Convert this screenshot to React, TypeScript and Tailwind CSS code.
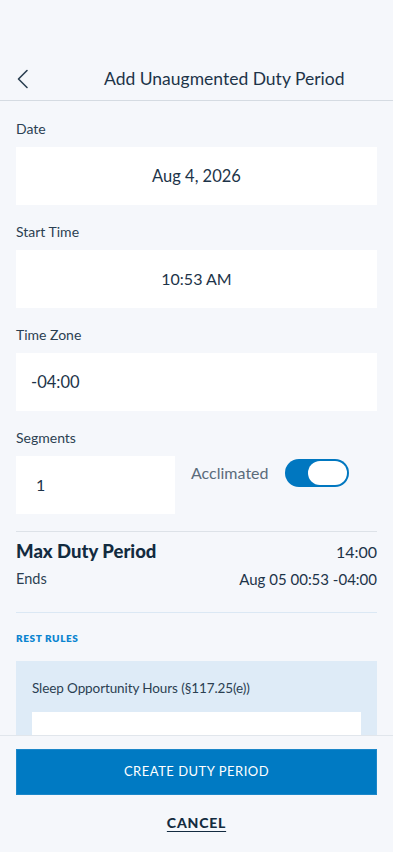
import React from 'react';

const font = { fontFamily: 'Lato, "Open Sans", Arial, sans-serif' };

function Field({ label, children }: { label: string; children: React.ReactNode }) {
  return (
    <div className="flex flex-col">
      <span className="text-[14px] leading-[20px] text-[#2b3f52]">{label}</span>
      <div className="mt-2">{children}</div>
    </div>
  );
}

export default function App() {
  return (
    <div style={font} className="h-[852px] w-full bg-[#f5f7fb] flex flex-col overflow-hidden text-[#1d3449]">
      {/* Header */}
      <div className="h-[101px] pt-[56px] border-b border-[#d5dbe2] shrink-0">
        <div className="h-[45px] flex items-center relative">
          <button className="w-[44px] h-[44px] flex items-center justify-center ml-[1px]">
            <svg width="14" height="20" viewBox="0 0 14 20" fill="none">
              <path d="M11 1.5 L2.5 10 L11 18.5" stroke="#2b3f52" strokeWidth="1.6" strokeLinecap="round" strokeLinejoin="round" />
            </svg>
          </button>
          <h1 className="ml-[59px] text-[17.5px] leading-[24px] text-[#1d3449]">Add Unaugmented Duty Period</h1>
        </div>
      </div>

      {/* Scroll area */}
      <div className="flex-1 overflow-hidden px-4 pt-[18px]">
        <div className="flex flex-col gap-[17px]">
          <Field label="Date">
            <div className="h-[58px] bg-white flex items-center justify-center text-[16.5px]">Aug 4, 2026</div>
          </Field>
          <Field label="Start Time">
            <div className="h-[58px] bg-white flex items-center justify-center text-[16px]">10:53 AM</div>
          </Field>
          <Field label="Time Zone">
            <div className="h-[58px] bg-white flex items-center px-[15px] text-[16.5px]">-04:00</div>
          </Field>
          <Field label="Segments">
            <div className="flex items-start">
              <div className="w-[159px] h-[58px] bg-white flex items-center px-5 text-[16px]">1</div>
              <div className="ml-4 flex items-center h-[34px] gap-[17px]">
                <span className="text-[16px] text-[#5b6b7a]">Acclimated</span>
                <div className="w-[64px] h-[28px] rounded-full bg-[#0077c0] flex items-center justify-end pr-[2px]">
                  <div className="w-[39px] h-[24px] rounded-full bg-white" />
                </div>
              </div>
            </div>
          </Field>
        </div>

        <div className="mt-[17px] border-t border-[#dde2e8]" />
        <div className="pt-2">
          <div className="flex justify-between items-center h-[24px]">
            <span className="text-[18.5px] font-black text-[#132b40]">Max Duty Period</span>
            <span className="text-[16px] text-[#1d3449]">14:00</span>
          </div>
          <div className="flex justify-between items-center h-[20px] mt-[5px]">
            <span className="text-[14.5px] text-[#2b3f52]">Ends</span>
            <span className="text-[15px] text-[#1d3449]">Aug 05 00:53 -04:00</span>
          </div>
        </div>
        <div className="mt-[23px] border-t border-[#dbe8f4]" />
        <div className="mt-[18px] h-[14px] flex items-center text-[10px] font-extrabold tracking-[0.6px] text-[#0a84d0]">REST RULES</div>

        <div className="mt-[16px] bg-[#deebf7] px-4 pt-[17px] pb-4">
          <div className="h-[20px] flex items-center text-[13.5px] tracking-[-0.1px] text-[#2b3f52]">Sleep Opportunity Hours (§117.25(e))</div>
          <div className="mt-[14px] h-[60px] bg-white" />
        </div>
      </div>

      {/* Footer */}
      <div className="h-[117px] shrink-0 border-t border-[#e1e6ec] bg-[#f5f7fb] px-4 pt-[13px] flex flex-col items-center">
        <button className="w-full h-[46px] bg-[#007ac3] border border-[#1c87c9] text-white text-[13px] tracking-[0.5px]">
          CREATE DUTY PERIOD
        </button>
        <button className="mt-[17px] h-[20px] text-[14px] font-black tracking-[0.8px] underline underline-offset-[3px] text-[#132b40]">
          CANCEL
        </button>
      </div>
    </div>
  );
}
